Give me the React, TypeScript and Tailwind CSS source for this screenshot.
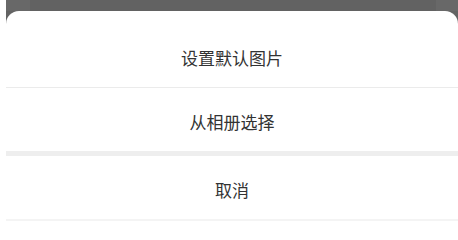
function Row({ label }: { label: string }) {
  return (
    <div className="flex h-[63px] items-center justify-center pt-[5px] text-[17px] text-[#333333]">
      {label}
    </div>
  );
}

function App() {
  return (
    <div
      className="flex h-[221px] w-[458px] overflow-hidden bg-white"
      style={{ fontFamily: '"Noto Sans CJK SC", "Noto Sans", sans-serif' }}
    >
      <div className="w-[6px] shrink-0 bg-white" />
      <div className="flex flex-1 flex-col bg-[#636363]">
        <div className="flex h-[11px] shrink-0">
          <div className="w-[24px] bg-[#686868]" />
          <div className="flex-1 bg-[#626262]" />
          <div className="w-[22px] bg-[#686868]" />
        </div>
        <div className="flex flex-1 flex-col rounded-t-[13px] bg-white pt-[13px]">
          <Row label="设置默认图片" />
          <div className="h-px bg-[#ebebeb]" />
          <Row label="从相册选择" />
          <div className="h-[5px] bg-[#eeeeee]" />
          <Row label="取消" />
          <div className="h-[2px] bg-[#f4f4f4]" />
        </div>
      </div>
    </div>
  );
}

export default App;
